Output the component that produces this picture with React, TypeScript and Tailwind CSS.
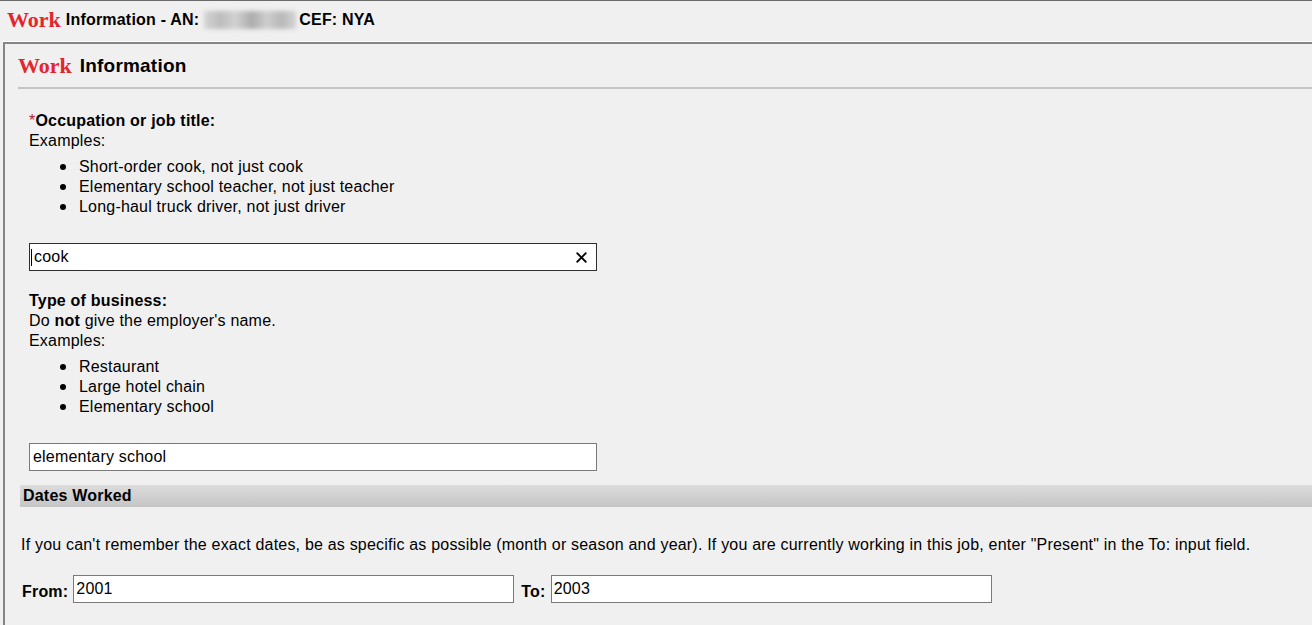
import { X } from 'lucide-react';

const occupationExamples = [
  'Short-order cook, not just cook',
  'Elementary school teacher, not just teacher',
  'Long-haul truck driver, not just driver',
];

const businessExamples = ['Restaurant', 'Large hotel chain', 'Elementary school'];

function ExampleList({ items }: { items: string[] }) {
  return (
    <ul className="mt-[6px]">
      {items.map((item) => (
        <li key={item} className="flex items-center pl-[31px] leading-[20px]">
          <span className="h-[6px] w-[6px] rounded-full bg-black" />
          <span className="ml-[13px]">{item}</span>
        </li>
      ))}
    </ul>
  );
}

export default function App() {
  return (
    <div className="min-h-screen overflow-hidden border-t border-[#6a6a6a] bg-[#f0f0f0] font-['Liberation_Sans',Arial,sans-serif] text-[16px] leading-[20px] tracking-[0.2px] text-black">
      {/* window header */}
      <div className="flex h-[41px] items-center pl-[7px] pb-[3px]">
        <span className="font-['Liberation_Serif',serif] text-[22px] font-bold tracking-normal text-[#e3262e]">Work</span>
        <span className="ml-[5px] font-bold">Information - AN:</span>
        <span className="ml-[5px] h-[18px] w-[92px] bg-[linear-gradient(90deg,#d4d4d4,#bcbcbc_18%,#d2d2d2_34%,#acacac_52%,#cecece_68%,#b8b8b8_84%,#d4d4d4)] blur-[2px]" />
        <span className="ml-[3px] font-bold">CEF: NYA</span>
      </div>

      <div className="ml-[3px] min-h-[590px] border-l-2 border-t-2 border-[#858585] shadow-[0_-1px_0_#ffffff]">
        <div className="ml-[13px] pt-[9px]">
          <div className="flex h-[26px] items-center">
            <span className="font-['Liberation_Serif',serif] text-[22px] font-bold tracking-normal text-[#e3262e]">Work</span>
            <span className="ml-[8px] text-[19px] font-bold">Information</span>
          </div>
          <div className="mt-[8px] h-[2px] bg-[#c4c4c4]" />
        </div>

        <div className="pl-[24px] pt-[22px]">
          <div className="font-bold">
            <span className="font-normal text-[#b3243a]">*</span>Occupation or job title:
          </div>
          <div>Examples:</div>
          <ExampleList items={occupationExamples} />

          <div className="mt-[26px] flex h-[28px] w-[568px] items-center border border-[#2e2e2e] bg-white pl-[1px] pr-[6px]">
            <span className="h-[17px] w-px bg-black" />
            <span className="ml-[2px] flex-1">cook</span>
            <X size={17} strokeWidth={2.5} className="text-black" />
          </div>

          <div className="mt-[20px] font-bold">Type of business:</div>
          <div>
            Do <b>not</b> give the employer's name.
          </div>
          <div>Examples:</div>
          <ExampleList items={businessExamples} />

          <div className="mt-[26px] flex h-[28px] w-[568px] items-center border border-[#7a7a7a] bg-white pl-[3px]">
            elementary school
          </div>
        </div>

        <div className="ml-[15px] mt-[14px] flex h-[22px] items-center bg-gradient-to-b from-[#dcdcdc] to-[#c5c5c5] pl-[3px] font-bold">
          Dates Worked
        </div>

        <p className="mt-[28px] pl-[16px]">
          If you can't remember the exact dates, be as specific as possible (month or season and year). If you are currently
          working in this job, enter "Present" in the To: input field.
        </p>

        <div className="mt-[20px] flex items-end pl-[17px]">
          <span className="mb-[1px] font-bold">From:</span>
          <div className="ml-[5px] flex h-[28px] w-[441px] items-center border border-[#7a7a7a] bg-white pl-[2px]">2001</div>
          <span className="mb-[1px] ml-[7px] font-bold">To:</span>
          <div className="ml-[5px] flex h-[28px] w-[441px] items-center border border-[#7a7a7a] bg-white pl-[2px]">2003</div>
        </div>
      </div>
    </div>
  );
}
